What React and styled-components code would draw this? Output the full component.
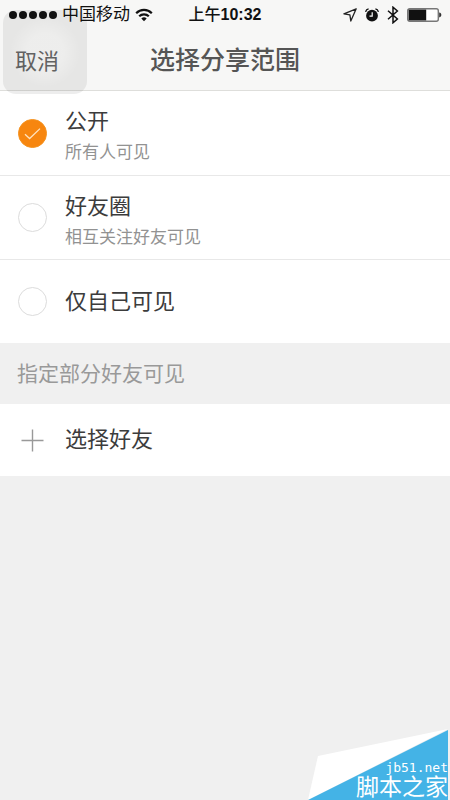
import * as React from 'react';
import styled, { createGlobalStyle } from 'styled-components';

const GlobalStyle = createGlobalStyle`
  * {
    box-sizing: border-box;
  }

  body {
    margin: 0;
    background: #f0f0f0;
    color: #3c3c3c;
    font-family: 'Liberation Sans', 'Noto Sans CJK SC', sans-serif;
  }
`;

const Page = styled.div`
  min-height: 100vh;
  position: relative;
  background: #f0f0f0;
`;

const Header = styled.header`
  position: relative;
  background: #f7f7f6;
  border-bottom: 1px solid #dededb;
`;

const StatusBar = styled.div`
  display: grid;
  grid-template-columns: 1fr auto 1fr;
  align-items: center;
  height: 30px;
  padding: 0 8px;
  color: #111111;
  font-size: 16px;
  line-height: 30px;
`;

const StatusGroup = styled.div`
  display: flex;
  align-items: center;
  justify-content: ${(props) => (props.$end ? 'flex-end' : 'flex-start')};
  gap: ${(props) => props.$gap}px;
`;

const Carrier = styled.span`
  font-size: 17px;
`;

const Time = styled.div`
  font-weight: 500;

  & > b {
    font-weight: 700;
  }
`;

const NavBar = styled.div`
  display: grid;
  grid-template-columns: 1fr auto 1fr;
  align-items: center;
  height: 60px;
  padding: 0 15px;
`;

const CancelButton = styled.button`
  justify-self: start;
  padding: 4px 0 0;
  border: 0;
  background: none;
  color: #666666;
  font-family: inherit;
  font-size: 22px;
  line-height: 32px;
`;

const Title = styled.h1`
  margin: 0;
  color: #555555;
  font-size: 25px;
  font-weight: 500;
  line-height: 36px;
`;

const AssistiveTouch = styled.div`
  position: absolute;
  top: 10px;
  left: 3px;
  width: 84px;
  height: 84px;
  border-radius: 13px;
  background: radial-gradient(circle, rgba(0, 0, 0, 0.04) 30%, rgba(0, 0, 0, 0.07) 60%);
  pointer-events: none;
`;

const List = styled.div`
  background: #ffffff;
`;

const Option = styled.label`
  display: flex;
  align-items: center;
  gap: 18px;
  min-height: 84px;
  padding: 0 18px;

  & + & {
    border-top: 1px solid #e8e8e8;
  }
`;

const RadioBox = styled.span`
  position: relative;
  display: flex;

  & > svg {
    position: absolute;
    top: 0;
    left: 0;
    pointer-events: none;
  }
`;

const Radio = styled.input`
  appearance: none;
  width: 29px;
  height: 29px;
  margin: 0;
  border: 1px solid #dcdcdc;
  border-radius: 50%;
  background: #ffffff;

  &:checked {
    border-color: #f5921e;
    background: #f7860f;
  }
`;

const OptionText = styled.span`
  display: flex;
  flex-direction: column;
  padding-top: ${(props) => (props.$hinted ? 6 : 0)}px;
`;

const OptionName = styled.span`
  color: #3c3c3c;
  font-size: 22px;
  line-height: 34px;
`;

const OptionHint = styled.span`
  color: #929292;
  font-size: 17px;
  line-height: 28px;
`;

const SectionTitle = styled.h2`
  margin: 0;
  padding: 0 17px;
  color: #999999;
  font-size: 21px;
  font-weight: 400;
  line-height: 61px;
`;

const AddButton = styled.button`
  display: flex;
  align-items: center;
  gap: 18px;
  width: 100%;
  height: 72px;
  padding: 0 18px;
  border: 0;
  background: #ffffff;
  font-family: inherit;
  text-align: left;
`;

const Watermark = styled.div`
  position: absolute;
  right: 2px;
  bottom: 0;
  width: 140px;
  height: 71px;
  color: #ffffff;
  text-align: right;

  & > svg {
    position: absolute;
    top: 0;
    left: 0;
  }
`;

const WatermarkText = styled.div`
  position: relative;
  display: flex;
  flex-direction: column;
  justify-content: flex-end;
  height: 100%;
`;

const SiteUrl = styled.span`
  font-family: 'DejaVu Sans Mono', monospace;
  font-size: 13px;
  line-height: 14px;
`;

const SiteName = styled.span`
  font-size: 23px;
  line-height: 25px;
`;

const SignalDots = () => (
  <svg width="49" height="10" viewBox="0 0 49 10" fill="#111111">
    {[5, 15, 25, 35, 45].map((x) => (
      <circle key={x} cx={x} cy="5" r="4" />
    ))}
  </svg>
);

const WifiIcon = () => (
  <svg width="18" height="14" viewBox="0 0 18 14" fill="none" stroke="#111111" strokeWidth="2.2">
    <path d="M1.2 5.2a11 11 0 0 1 15.6 0" />
    <path d="M4.2 8.3a6.8 6.8 0 0 1 9.6 0" />
    <path d="M9 13.2 6.3 10.5a3.8 3.8 0 0 1 5.4 0z" fill="#111111" stroke="none" />
  </svg>
);

const LocationIcon = () => (
  <svg width="14" height="14" viewBox="0 0 14 14" fill="none" stroke="#222222" strokeWidth="1.3">
    <path d="M13.2.8.9 5.8l6 1 .9 6.2z" strokeLinejoin="round" />
  </svg>
);

const AlarmIcon = () => (
  <svg width="14" height="14" viewBox="0 0 14 14" fill="none">
    <circle cx="7" cy="7.7" r="5.9" fill="#111111" />
    <path d="M.6 3.8A4 4 0 0 1 3.6.9M13.4 3.8a4 4 0 0 0-3-2.9" stroke="#111111" strokeWidth="1.3" />
    <path d="M7.2 4.2v4H4.5" stroke="#ffffff" strokeWidth="1.2" />
  </svg>
);

const BluetoothIcon = () => (
  <svg width="12" height="18" viewBox="0 0 12 18" fill="none" stroke="#111111" strokeWidth="1.5">
    <path d="m1 4.8 9.4 8.2L6 16.8V1.2L10.4 5 1 13.2" />
  </svg>
);

const BatteryIcon = () => (
  <svg width="35" height="14" viewBox="0 0 35 14">
    <rect x="0.7" y="0.7" width="30.6" height="12.6" rx="2" fill="#ffffff" stroke="#777777" strokeWidth="1.4" />
    <rect x="1.6" y="1.6" width="17.6" height="10.8" fill="#111111" />
    <path d="M32.2 4.6c2.8.3 2.8 4.5 0 4.8z" fill="#333333" />
  </svg>
);

const CheckIcon = () => (
  <svg width="29" height="29" viewBox="0 0 29 29" fill="none" stroke="#ffe3bf" strokeWidth="1.3">
    <path d="m7 15.2 4.6 4.3L22 9.6" />
  </svg>
);

const PlusIcon = () => (
  <svg width="29" height="29" viewBox="0 0 29 29" stroke="#999999" strokeWidth="1.4">
    <path d="M3.5 14.5h22M14.5 3.5v22" />
  </svg>
);

const options = [
  { value: 'public', name: '公开', hint: '所有人可见' },
  { value: 'friends', name: '好友圈', hint: '相互关注好友可见' },
  { value: 'private', name: '仅自己可见' },
];

const App = () => {
  const [selected, setSelected] = React.useState('public');

  return (
    <Page>
      <GlobalStyle />
      <Header>
        <StatusBar>
          <StatusGroup $gap={5}>
            <SignalDots />
            <Carrier>中国移动</Carrier>
            <WifiIcon />
          </StatusGroup>
          <Time>
            上午<b>10:32</b>
          </Time>
          <StatusGroup $gap={8} $end>
            <LocationIcon />
            <AlarmIcon />
            <BluetoothIcon />
            <BatteryIcon />
          </StatusGroup>
        </StatusBar>
        <NavBar>
          <CancelButton type="button">取消</CancelButton>
          <Title>选择分享范围</Title>
        </NavBar>
        <AssistiveTouch />
      </Header>
      <List>
        {options.map((option) => (
          <Option key={option.value}>
            <RadioBox>
              <Radio
                type="radio"
                name="scope"
                value={option.value}
                checked={selected === option.value}
                onChange={() => setSelected(option.value)}
              />
              {selected === option.value && <CheckIcon />}
            </RadioBox>
            <OptionText $hinted={Boolean(option.hint)}>
              <OptionName>{option.name}</OptionName>
              {option.hint && <OptionHint>{option.hint}</OptionHint>}
            </OptionText>
          </Option>
        ))}
      </List>
      <SectionTitle>指定部分好友可见</SectionTitle>
      <AddButton type="button">
        <PlusIcon />
        <OptionName>选择好友</OptionName>
      </AddButton>
      <Watermark>
        <svg width="140" height="71" viewBox="0 0 140 71">
          <path d="M10 27 140 0 0 71z" fill="#ffffff" />
          <path d="M140 1v70H0z" fill="#44b3e6" />
        </svg>
        <WatermarkText>
          <SiteUrl>jb51.net</SiteUrl>
          <SiteName>脚本之家</SiteName>
        </WatermarkText>
      </Watermark>
    </Page>
  );
};

export default App;
